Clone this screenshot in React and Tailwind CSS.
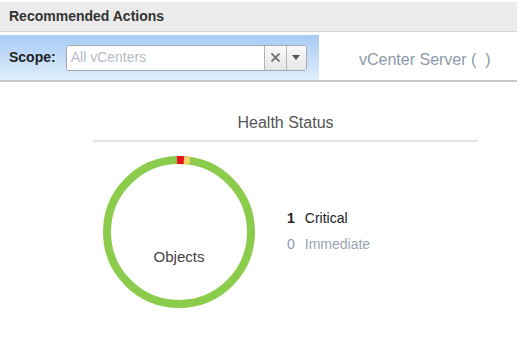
import React from "react";

export default function App() {
  const r = 72;
  const c = 2 * Math.PI * r;
  return (
    <div className="w-[520px] h-[341px] bg-white overflow-hidden" style={{ fontFamily: '"Liberation Sans", Arial, sans-serif' }}>
      <div className="w-[517px] pt-[2px] bg-white">
        <div className="h-[30px] bg-[#ebebeb] border-b border-[#d6d6d6] flex items-center pl-[9px]">
          <span className="text-[14px] font-bold text-[#333]">Recommended Actions</span>
        </div>
      </div>
      <div className="w-[517px] mt-[3px] flex border-b-2 border-[#c9c9c9]">
        <div className="w-[319px] h-[45px] bg-gradient-to-b from-[#a6cbf3] to-[#e0eefc] flex items-center pl-[9px]">
          <span className="text-[14px] font-bold text-[#222] mr-[10px]">Scope:</span>
          <div className="flex h-[26px] w-[241px] border border-[#a9a9a9] rounded-[3px] bg-white overflow-hidden">
            <div className="flex-1 flex items-center pl-[4px] text-[14px] text-[#b5bcc6]">All vCenters</div>
            <div className="w-[22px] border-l border-[#b5b5b5] bg-gradient-to-b from-[#fafafa] to-[#e6e6e6] flex items-center justify-center">
              <svg width="11" height="11" viewBox="0 0 11 11"><path d="M1.5 1.5L9.5 9.5M9.5 1.5L1.5 9.5" stroke="#777" strokeWidth="1.8" /></svg>
            </div>
            <div className="w-[20px] border-l border-[#b5b5b5] bg-gradient-to-b from-[#fafafa] to-[#e6e6e6] flex items-center justify-center">
              <svg width="8" height="5" viewBox="0 0 8 5"><path d="M0 0H8L4 5Z" fill="#555" /></svg>
            </div>
          </div>
        </div>
        <div className="flex-1 flex items-center pl-[40px] pt-[5px]">
          <span className="text-[16px] text-[#8c9aab]">vCenter Server (&nbsp; )</span>
        </div>
      </div>
      <div className="ml-[93px] w-[385px] flex flex-col items-center mt-[32px]">
        <div className="text-[16px] text-[#555] leading-[18px]">Health Status</div>
        <div className="w-[385px] h-[2px] bg-[#e4e4e4] mt-[8px]"></div>
      </div>
      <div className="flex items-start mt-[14px] pl-[103px]">
        <div className="relative w-[152px] h-[152px]">
          <svg width="152" height="152" viewBox="0 0 152 152">
            <circle cx="76" cy="76" r={r} fill="none" stroke="#8ccc4c" strokeWidth="8" />
            <circle cx="76" cy="76" r={r} fill="none" stroke="#e8121a" strokeWidth="8"
              strokeDasharray={`7 ${c}`} transform="rotate(-91.6 76 76)" />
            <circle cx="76" cy="76" r={r} fill="none" stroke="#f2d16b" strokeWidth="8"
              strokeDasharray={`6 ${c}`} transform="rotate(-86 76 76)" />
          </svg>
          <div className="absolute left-0 right-0 top-[90px] text-center text-[15px] text-[#444]">Objects</div>
        </div>
        <div className="ml-[32px] mt-[52px] flex flex-col gap-[5px] text-[14px]">
          <div className="flex gap-[10px]"><span className="font-bold text-[#222]">1</span><span className="text-[#222]">Critical</span></div>
          <div className="flex gap-[10px]"><span className="text-[#8c9aab]">0</span><span className="text-[#9aa6b4]">Immediate</span></div>
        </div>
      </div>
    </div>
  );
}
